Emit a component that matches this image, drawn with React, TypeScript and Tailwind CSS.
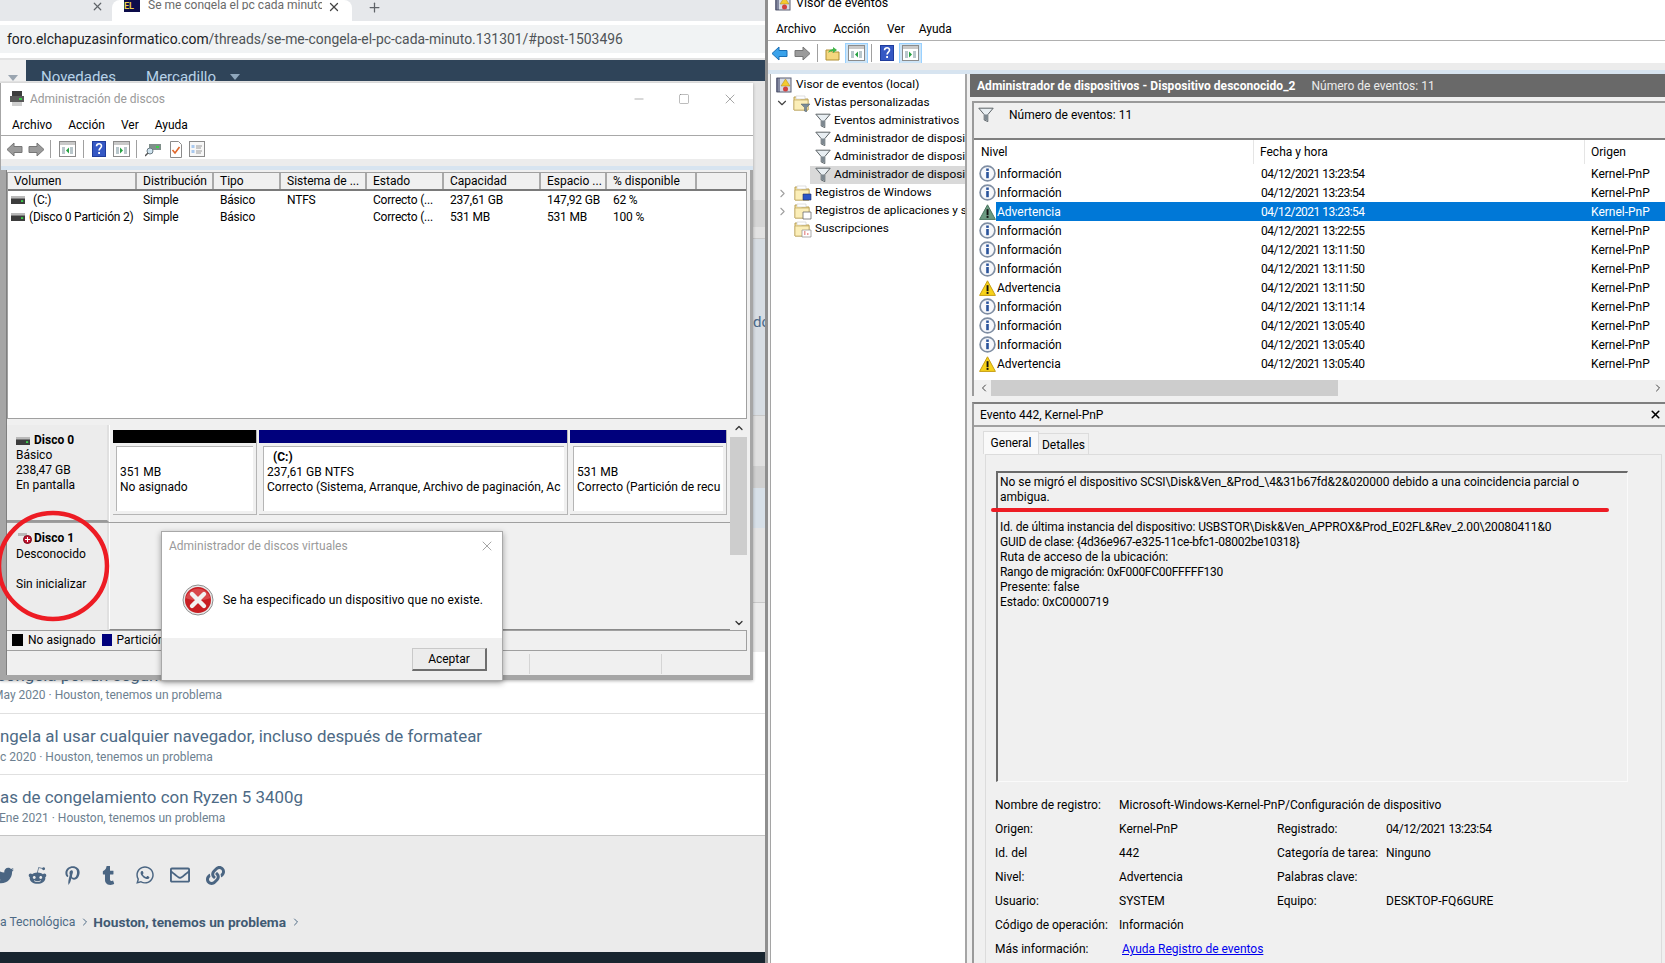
import React from "react";
import { X, Plus, Minus, Square, ChevronUp, ChevronDown, ChevronRight, ChevronLeft } from "lucide-react";
import { FaTwitter, FaRedditAlien, FaPinterestP, FaTumblr, FaWhatsapp, FaRegEnvelope, FaLink } from "react-icons/fa";

const Arrow = ({ dir, color, stroke }: { dir: "l" | "r"; color: string; stroke: string }) => (
  <svg width="17" height="15" viewBox="0 0 17 15" className={dir === "r" ? "-scale-x-100" : ""}>
    <path d="M1 7.5 8 1v3.5h8v6H8V14z" fill={color} stroke={stroke} />
  </svg>
);
const PanelIcon = ({ right }: { right?: boolean }) => (
  <svg width="17" height="16" viewBox="0 0 17 16">
    <rect x=".5" y=".5" width="16" height="15" fill="#fff" stroke="#8b8b8b" />
    <rect x="1" y="1" width="15" height="3" fill="#c9c9c9" />
    <rect x="3" y="6" width="3" height="7" fill="#b9c7cc" />
    <rect x="11" y="6" width="3" height="7" fill="#b9c7cc" />
    <path d={right ? "M7 6.5v6l3-3z" : "M10 6.5v6l-3-3z"} fill="#27a243" />
  </svg>
);
const Help = () => (
  <svg width="14" height="16" viewBox="0 0 14 16">
    <rect width="14" height="16" fill="#1f3c9c" />
    <rect x="1" y="1" width="12" height="14" fill="#3558c4" />
    <path d="M4.5 5.2C4.8 2 9.5 2 9.5 5c0 2-2.4 2.2-2.4 4.5" fill="none" stroke="#fff" strokeWidth="1.6" />
    <rect x="6.2" y="11" width="1.8" height="2" fill="#fff" />
  </svg>
);
const Sep = () => <div className="w-px h-[18px] bg-[#a0a0a0]" />;
const DriveIcon = () => (
  <svg width="14" height="8" viewBox="0 0 14 8" className="shrink-0">
    <rect y="0" width="14" height="2.4" fill="#b9b9b9" />
    <rect y="2.4" width="14" height="5.6" fill="#3c3c3c" />
    <rect x="10" y="4.2" width="2.2" height="1.8" fill="#3bd14a" />
  </svg>
);
const Funnel = ({ size = 16 }: { size?: number }) => (
  <svg width={size} height={size} viewBox="0 0 16 16" className="shrink-0">
    <path d="M.8 1.2h14.4L9.8 7.6v7L6.2 13V7.6z" fill="#e8eef2" stroke="#5d6468" />
    <path d="M6.4 7.6h3.2v6.2l-3.2-1.2z" fill="#7d8890" />
  </svg>
);
const Folder = ({ badge }: { badge?: "funnel" | "logs" | "app" | "sub" }) => (
  <svg width="18" height="17" viewBox="0 0 18 17" className="shrink-0">
    <path d="M1 2h5l1.5 2H15v11H1z" fill="#f8e39a" stroke="#b89f55" />
    <path d="M3 1h9v3H3z" fill="#fff" stroke="#c9c9c9" strokeWidth=".6" />
    <path d="M1 5h14v10H1z" fill="#fbeeb8" stroke="#c0a65f" strokeWidth=".7" />
    {badge === "funnel" && <path d="M8 9h9l-3.5 3.6V17l-2-1v-3.4z" fill="#7a8c98" stroke="#4f5d66" strokeWidth=".5" />}
    {badge === "logs" && <path d="M9 9h8v6H9z" fill="#2b56c6" stroke="#1e2d66" strokeWidth=".6" />}
    {badge === "app" && <path d="M9 9h8v7H9z" fill="#fff" stroke="#6b6b6b" strokeWidth=".8" />}
    {badge === "sub" && (
      <g>
        <path d="M8 9h9v7H8z" fill="#fff" stroke="#8a8a8a" strokeWidth=".7" />
        <path d="M10 13h1.5M13 13h1.5M10 11h1.5" stroke="#d23a3a" strokeWidth="1" />
      </g>
    )}
  </svg>
);
const ViewerIcon = () => (
  <svg width="16" height="16" viewBox="0 0 16 16" className="shrink-0">
    <rect x="1" y="1" width="14" height="14" fill="#d6dbe6" stroke="#5a5f73" />
    <path d="M1 1v14M3 1v14" stroke="#30365a" strokeWidth="1" />
    <path d="M9.5 2 14 9H5z" fill="#f4c92e" stroke="#a8861d" strokeWidth=".5" />
    <circle cx="9.5" cy="12" r="2.5" fill="#d2403f" />
  </svg>
);
const Info = () => (
  <svg width="17" height="17" viewBox="0 0 17 17" className="shrink-0">
    <circle cx="8.5" cy="8.5" r="7.4" fill="#f7f8fb" stroke="#7f8ea3" strokeWidth="1.7" />
    <rect x="7.2" y="7" width="2.6" height="6.2" fill="#29539b" />
    <rect x="7.2" y="3.5" width="2.6" height="2.4" fill="#29539b" />
  </svg>
);
const Warn = ({ sel }: { sel?: boolean }) => (
  <svg width="17" height="16" viewBox="0 0 17 16" className="shrink-0">
    <path d="M8.5 .8 16.4 15.4H.6z" fill={sel ? "#6c9a82" : "#f7d21a"} stroke={sel ? "#4a7660" : "#c69d12"} />
    <rect x="7.6" y="5.2" width="1.9" height="6" fill="#111" />
    <rect x="7.6" y="12" width="1.9" height="1.9" fill="#111" />
  </svg>
);
const ErrorIcon = () => (
  <svg width="32" height="32" viewBox="0 0 32 32">
    <circle cx="16" cy="16" r="15" fill="#e9e9e9" stroke="#8f8f8f" />
    <circle cx="16" cy="16" r="13" fill="#c81e23" />
    <path d="M3.5 14a13 13 0 0 1 25 0c-7 3-18 3-25 0z" fill="#e56266" opacity=".6" />
    <path d="M10 10l12 12M22 10 10 22" stroke="#f2f2f2" strokeWidth="4.4" strokeLinecap="round" />
  </svg>
);

const F = "[font-family:Roboto,'Liberation_Sans',sans-serif]";

const diskCols = [
  ["Volumen", 129],
  ["Distribución", 77],
  ["Tipo", 67],
  ["Sistema de ...", 86],
  ["Estado", 77],
  ["Capacidad", 97],
  ["Espacio ...", 66],
  ["% disponible", 90],
] as const;

const vols = [
  ["(C:)", "Simple", "Básico", "NTFS", "Correcto (...", "237,61 GB", "147,92 GB", "62 %"],
  ["(Disco 0 Partición 2)", "Simple", "Básico", "", "Correcto (...", "531 MB", "531 MB", "100 %"],
];

function DiskWindow() {
  return (
    <div className="absolute left-0 top-[83px] w-[753px] h-[597px] bg-[#a6a6a6] flex flex-col text-[12px] text-black shadow-[0_1px_3px_rgba(0,0,0,.3)]">
      <div className="bg-white ml-px h-[31px] flex items-center pl-[9px] pr-[15px] shrink-0">
        <svg width="14" height="16" viewBox="0 0 14 16" className="mr-[6px]">
          <rect x="2" y="0" width="10" height="8" fill="#3c3c3c" />
          <rect x="0" y="5" width="14" height="6" fill="#5a5a5a" />
          <rect x="2" y="11" width="10" height="4" fill="#cfcfcf" />
          <rect x="9" y="7" width="3" height="2" fill="#3bd14a" />
        </svg>
        <span className="text-[#9a9a9a]">Administración de discos</span>
        <div className="ml-auto flex items-center gap-[32px] text-[#7a7a7a]">
          <Minus size={14} strokeWidth={1} />
          <Square size={12} strokeWidth={1} />
          <X size={16} strokeWidth={1} />
        </div>
      </div>
      <div className="bg-white ml-px h-[22px] flex items-center gap-[16px] pl-[11px] border-b border-[#a8a8a8] shrink-0">
        <span>Archivo</span><span>Acción</span><span>Ver</span><span>Ayuda</span>
      </div>
      <div className="bg-white ml-px h-[23px] flex items-center pl-[5px] pt-[3px] shrink-0">
        <Arrow dir="l" color="#9b9b9b" stroke="#777" />
        <div className="w-[5px]" />
        <Arrow dir="r" color="#9b9b9b" stroke="#777" />
        <div className="w-[5px]" />
        <Sep />
        <div className="w-2" />
        <PanelIcon />
        <div className="w-[7px]" />
        <Sep />
        <div className="w-2" />
        <Help />
        <div className="w-[7px]" />
        <PanelIcon right />
        <div className="w-[6px]" />
        <Sep />
        <div className="w-2" />
        <svg width="16" height="16" viewBox="0 0 16 16"><rect x="4" y="3" width="12" height="6" fill="#7f8f8a" /><rect x="11" y="5" width="3" height="2" fill="#3bd14a" /><circle cx="5" cy="10" r="3" fill="#cfe3ef" stroke="#6b7c85" /><path d="M3 12 0 15" stroke="#555" strokeWidth="1.5" /></svg>
        <div className="w-[9px]" />
        <svg width="12" height="17" viewBox="0 0 12 17"><path d="M.5.5h8l3 3v13H.5z" fill="#fff" stroke="#8b8b8b" /><path d="M2.5 9l2.5 3 4.5-6" fill="none" stroke="#e0662a" strokeWidth="1.6" /></svg>
        <div className="w-[7px]" />
        <svg width="16" height="16" viewBox="0 0 16 16"><rect x=".5" y=".5" width="15" height="15" fill="#f7f7f7" stroke="#8b8b8b" /><path d="M2.5 4h3v3h-3zM2.5 9h3v3h-3z" fill="#a9c9ef" /><path d="M7 5h6M7 7h5M7 10h6M7 12h5" stroke="#9a9a9a" /></svg>
      </div>
      <div className="h-[7px] bg-[#ececec] ml-px shrink-0" />
      <div className="h-1 bg-[#d7e4f0] ml-px shrink-0" />
      <div className="flex-1 min-h-0 ml-[6px] mr-[3px] mb-[5px] flex flex-col bg-[#f0f0f0] border-l border-[#808080]">
        {/* volume table */}
        <div className="h-[247px] bg-white border border-[#a0a0a0] mr-[3px] mt-[2px] shrink-0 overflow-hidden">
          <div className="flex h-[18px] bg-[#f0f0f0] border-b-2 border-[#7a7a7a]">
            {diskCols.map(([t, w]) => (
              <div key={t} style={{ width: w }} className="pl-[6px] shrink-0 border-r-2 border-[#a9a9a9] whitespace-nowrap leading-[17px]">{t}</div>
            ))}
          </div>
          {vols.map((r, i) => (
            <div key={i} className="flex h-[17px] items-center tracking-[-0.2px]">
              {r.map((c, j) => (
                <div key={j} style={{ width: diskCols[j][1] }} className={`shrink-0 whitespace-nowrap ${j === 0 ? "pl-[3px] flex items-center" : "pl-[6px]"}`}>
                  {j === 0 ? (
                    <>
                      <DriveIcon />
                      <span className={i === 0 ? "ml-[8px]" : "ml-[4px]"}>{c}</span>
                    </>
                  ) : c}
                </div>
              ))}
            </div>
          ))}
        </div>
        {/* graphical pane */}
        <div className="h-[212px] flex shrink-0 border-b border-[#a0a0a0] mr-[3px]">
          <div className="flex-1 min-w-0 flex flex-col pt-[6px]">
            <div className="h-[98px] flex border-b border-[#a0a0a0] shrink-0">
              <div className="w-[102px] shrink-0 bg-[#ececec] border-r-2 border-b-2 border-[#e0e0e0] border-b-[#9a9a9a] pl-[9px] pt-[8px] leading-[15px]">
                <div className="flex items-center gap-[4px] font-bold"><DriveIcon /><span>Disco 0</span></div>
                <div>Básico</div>
                <div>238,47 GB</div>
                <div>En pantalla</div>
              </div>
              <div className="flex-1 flex pl-[3px] pt-[5px] pr-[3px] gap-[2px] bg-[#f0f0f0] border-l border-[#fff]">
                {[
                  ["w-[144px]", "bg-black", "", "351 MB", "No asignado"],
                  ["w-[309px]", "bg-[#00007c]", "(C:)", "237,61 GB NTFS", "Correcto (Sistema, Arranque, Archivo de paginación, Ac"],
                  ["flex-1", "bg-[#00007c]", "", "531 MB", "Correcto (Partición de recu"],
                ].map(([w, bg, h, a, b], i) => (
                  <div key={i} className={`${w} h-[85px] flex flex-col overflow-hidden border-r border-b border-[#b5b5b5]`}>
                    <div className={`${bg} h-[13px] shrink-0`} />
                    <div className={`flex-1 bg-white mt-[3px] border-l border-t border-[#b5b5b5] ml-[3px] mr-[3px] mb-[3px] pl-[3px] leading-[15px] whitespace-nowrap overflow-hidden ${i === 1 ? "ml-[4px] pt-[3px]" : "pt-[18px]"}`}>
                      {h && <div className="font-bold pl-[6px]">{h}</div>}
                      <div>{a}</div>
                      <div>{b}</div>
                    </div>
                  </div>
                ))}
              </div>
            </div>
            <div className="flex-1 flex">
              <div className="w-[102px] shrink-0 bg-[#ececec] border-r-2 border-[#e0e0e0] pl-[9px] pt-[8px] leading-[15px]">
                <div className="flex items-center gap-[2px] font-bold">
                  <span className="relative w-[16px] h-[12px] shrink-0">
                    <span className="absolute left-[2px] top-0 w-[9px] h-[3px] bg-[#b9b9b9]" />
                    <span className="absolute right-0 top-[2px] w-[9px] h-[9px] rounded-full bg-[#c4122f] border border-[#7a0a1b]" />
                    <span className="absolute right-[2px] top-[6px] w-[5px] h-px bg-white" />
                    <span className="absolute right-[4px] top-[4px] w-px h-[5px] bg-white" />
                  </span>
                  <span>Disco 1</span>
                </div>
                <div className="mt-px">Desconocido</div>
                <div className="mt-[15px]">Sin inicializar</div>
              </div>
              <div className="flex-1 border-l border-white border-b border-b-[#8a8a8a]" />
            </div>
          </div>
          <div className="w-[17px] shrink-0 bg-[#f0f0f0] flex flex-col items-center pt-[1px] pb-[1px]">
            <ChevronUp size={12} strokeWidth={2.5} className="text-[#333] shrink-0 mt-[2px]" />
            <div className="w-full h-[118px] bg-[#cdcdcd] mt-[3px]" />
            <div className="flex-1" />
            <ChevronDown size={12} strokeWidth={2.5} className="text-[#333] shrink-0" />
          </div>
        </div>
        {/* legend */}
        <div className="h-[20px] border-b border-r border-[#a0a0a0] mr-[3px] flex items-center pl-[5px] pb-[1px] shrink-0 whitespace-nowrap">
          <span className="w-[11px] h-[12px] bg-black mr-[5px]" />
          <span>No asignado</span>
          <span className="w-[10px] h-[12px] bg-[#00007c] ml-[6px] mr-[5px]" />
          <span>Partición primaria</span>
        </div>
        {/* status */}
        <div className="flex-1 mt-[2px] flex justify-end pr-[3px] bg-[#f0f0f0]">
          <div className="w-[132px] border-l border-[#d5d5d5] my-[1px]" />
          <div className="w-[86px] border-l border-[#d5d5d5] my-[1px]" />
        </div>
      </div>
    </div>
  );
}

function VirtualDialog() {
  return (
    <div className="absolute left-[161px] top-[531px] w-[342px] h-[150px] bg-white border border-[#a8a8a8] shadow-[0_2px_6px_rgba(0,0,0,.35)] flex flex-col text-[12px] text-black">
      <div className="h-[29px] flex items-center pl-[7px] pr-[7px] -mt-px shrink-0">
        <span className="text-[#9a9a9a]">Administrador de discos virtuales</span>
        <X size={16} strokeWidth={1} className="ml-auto text-[#777]" />
      </div>
      <div className="flex-1 flex items-center pl-[20px] gap-[9px] pt-[2px]">
        <ErrorIcon />
        <span className="tracking-[.1px]">Se ha especificado un dispositivo que no existe.</span>
      </div>
      <div className="h-[42px] bg-[#f0f0f0] flex items-center justify-end pr-[15px] shrink-0">
        <div className="w-[75px] h-[23px] bg-[#ececec] border border-[#c9c9c9] border-r-2 border-b-2 border-r-[#6e6e6e] border-b-[#6e6e6e] flex items-center justify-center">Aceptar</div>
      </div>
    </div>
  );
}

function Browser() {
  return (
    <div className={`relative w-[765px] h-[963px] shrink-0 overflow-hidden flex flex-col bg-white ${F}`}>
      {/* tabs */}
      <div className="h-[21px] shrink-0 bg-[#e6e8eb] flex items-start text-[#5f6368]">
        <X size={13} strokeWidth={2.2} className="ml-[91px] mt-0 shrink-0" />
        <div className="ml-[8px] w-[240px] h-[21px] bg-white rounded-t-lg flex items-start pl-[12px] shrink-0">
          <span className="w-[16px] h-[12px] bg-[#0c0c4a] shrink-0 text-[9px] font-bold text-[#e8d04a] leading-[12px] overflow-hidden">EL</span>
          <span className="ml-[8px] w-[174px] overflow-hidden whitespace-nowrap text-[12px] leading-[10px] text-[#6a6a6a]">Se me congela el pc cada minuto</span>
          <X size={14} strokeWidth={2.2} className="ml-[5px] shrink-0 text-[#444]" />
        </div>
        <Plus size={15} strokeWidth={2} className="ml-[15px] shrink-0" />
      </div>
      {/* address */}
      <div className="h-[37px] shrink-0 bg-white pt-[4px] pb-[5px]">
        <div className="h-[28px] bg-[#f1f3f4] flex items-center pl-[7px] pt-[1px] text-[13.9px] whitespace-nowrap text-[#4f5357]">
          <span className="text-[#202124]">foro.elchapuzasinformatico.com</span>/threads/se-me-congela-el-pc-cada-minuto.131301/#post-1503496
        </div>
      </div>
      {/* nav */}
      <div className="h-[23px] shrink-0 flex border-t-2 border-[#e3e3e3]">
        <div className="w-[26px] bg-[#f0f0f0] flex pl-[8px] pt-[15px]"><span className="w-0 h-0 border-x-[5px] border-x-transparent border-t-[6px] border-t-[#9aa5b0]" /></div>
        <div className="flex-1 bg-[#2f4459] flex items-start pl-[15px] pt-[8px] text-[15px] leading-[18px] text-[#b7d2e8] whitespace-nowrap">
          <span>Novedades</span>
          <span className="ml-[30px]">Mercadillo</span>
          <span className="ml-[14px] mt-[6px] w-0 h-0 border-x-[5px] border-x-transparent border-t-[6px] border-t-[#8fa7bc]" />
        </div>
      </div>
      {/* page bands behind the windows */}
      <div className="h-[119px] shrink-0 bg-[#e5e5e5]" />
      <div className="h-[27px] shrink-0 bg-[#d5d5d5]" />
      <div className="h-[12px] shrink-0 bg-[#e2e2e2] border-b border-[#c9c9c9]" />
      <div className="h-[176px] shrink-0 bg-[#d7dde3] relative">
        <span className="absolute right-0 top-[75px] text-[15px] leading-[16px] text-[#4a6a8a] w-[12px] overflow-hidden">do</span>
      </div>
      <div className="h-[51px] shrink-0 bg-[#e0e0e0] border-t border-[#c9c9c9]" />
      <div className="h-[22px] shrink-0 bg-[#d0d0d0]" />
      <div className="h-[40px] shrink-0 bg-[#d7e0e8]" />
      <div className="h-[75px] shrink-0 bg-[#e3e3e3] border-b border-[#c9c9c9]" />
      <div className="h-[49px] shrink-0 bg-[#ebebeb]" />
      {/* threads */}
      <div className="h-[62px] shrink-0 bg-white border-b border-[#e0e0e0] relative whitespace-nowrap overflow-hidden">
        <div className="text-[16.9px] leading-[22px] text-[#4d6a85] mt-[12px] -ml-[3px]">congela por un segundo</div>
        <div className="text-[12px] leading-[15px] text-[#6d7f90] mt-[2px] -ml-[7px]">May 2020 · Houston, tenemos un problema</div>
      </div>
      <div className="h-[61px] shrink-0 bg-white border-b border-[#e0e0e0] pt-[11px] whitespace-nowrap overflow-hidden">
        <div className="text-[16.9px] leading-[22px] text-[#4d6a85]">ngela al usar cualquier navegador, incluso después de formatear</div>
        <div className="text-[12px] leading-[15px] text-[#6d7f90] mt-[3px]">c 2020 · Houston, tenemos un problema</div>
      </div>
      <div className="h-[61px] shrink-0 bg-white border-b border-[#c4c4c4] pt-[11px] whitespace-nowrap overflow-hidden">
        <div className="text-[16.9px] leading-[22px] text-[#4d6a85]">as de congelamiento con Ryzen 5 3400g</div>
        <div className="text-[12px] leading-[15px] text-[#6d7f90] mt-[3px] -ml-[1px]">Ene 2021 · Houston, tenemos un problema</div>
      </div>
      <div className="flex-1 bg-[#ebebeb] flex flex-col">
        <div className="h-[77px] flex items-center pt-[1px] text-[#4a6582] shrink-0">
          <FaTwitter size={19} className="-ml-[5px] shrink-0" />
          <FaRedditAlien size={19} className="ml-[14px] shrink-0" />
          <FaPinterestP size={19} className="ml-[16px] shrink-0" />
          <FaTumblr size={19} className="ml-[17px] shrink-0" />
          <FaWhatsapp size={20} className="ml-[17px] shrink-0" />
          <FaRegEnvelope size={20} className="ml-[15px] shrink-0" />
          <FaLink size={19} className="ml-[16px] shrink-0" />
        </div>
        <div className="h-[18px] flex items-center text-[12.2px] text-[#4d6a85] whitespace-nowrap shrink-0">
          <span>a Tecnológica</span>
          <ChevronRight size={12} className="ml-[4px] shrink-0" />
          <span className="ml-[2px] text-[13.7px] font-bold text-[#415a73]">Houston, tenemos un problema</span>
          <ChevronRight size={12} className="ml-[4px] shrink-0" />
        </div>
        <div className="flex-1" />
        <div className="h-[11px] bg-[#18252f] shrink-0" />
      </div>

      <DiskWindow />
      <VirtualDialog />
      {/* hand-drawn annotation */}
      <svg width="114" height="114" viewBox="0 0 114 114" className="absolute left-0 top-[510px]">
        <ellipse cx="53" cy="56" rx="54" ry="53" fill="none" stroke="#ed1c24" strokeWidth="4.5" />
      </svg>
    </div>
  );
}

const treeRow = "h-[18px] flex items-center whitespace-nowrap overflow-hidden";

const events: [string, string][] = [
  ["i", "04/12/2021 13:23:54"],
  ["i", "04/12/2021 13:23:54"],
  ["s", "04/12/2021 13:23:54"],
  ["i", "04/12/2021 13:22:55"],
  ["i", "04/12/2021 13:11:50"],
  ["i", "04/12/2021 13:11:50"],
  ["w", "04/12/2021 13:11:50"],
  ["i", "04/12/2021 13:11:14"],
  ["i", "04/12/2021 13:05:40"],
  ["i", "04/12/2021 13:05:40"],
  ["w", "04/12/2021 13:05:40"],
];

function EventViewer() {
  return (
    <div className={`flex-1 min-w-0 h-[963px] flex flex-col bg-white border-l-[3px] border-[#8f8f8f] text-[12px] text-black overflow-hidden ${F}`}>
      <div className="h-[14px] shrink-0 flex items-center pl-[7px] gap-[5px] overflow-visible">
        <div className="-mt-[8px]"><ViewerIcon /></div>
        <span className="text-[12.5px] -mt-[8px]">Visor de eventos</span>
      </div>
      <div className="h-[27px] shrink-0 flex items-center gap-[17px] pl-[8px] pt-[4px] border-b border-[#b0b0b0] text-[12px]">
        <span>Archivo</span><span>Acción</span><span>Ver</span><span className="-ml-[3px]">Ayuda</span>
      </div>
      <div className="h-[22px] shrink-0 flex items-center pl-[3px] pt-[2px]">
        <Arrow dir="l" color="#3aa2ea" stroke="#1a6fb5" />
        <div className="w-[6px]" />
        <Arrow dir="r" color="#9b9b9b" stroke="#777" />
        <div className="w-[6px]" />
        <Sep />
        <div className="w-[7px]" />
        <svg width="15" height="15" viewBox="0 0 15 15" className="shrink-0"><path d="M1 4h5l1 2h7v8H1z" fill="#f5d77e" stroke="#b08f35" /><path d="M3 7c1-3 3-4 5-4V1l4 3-4 3V5C6 5 4 6 3 7z" fill="#42b54a" /></svg>
        <div className="w-[5px]" />
        <div className="w-[23px] h-[21px] bg-[#cce4f7] border border-[#99d1ff] flex items-center justify-center"><PanelIcon /></div>
        <div className="w-[3px]" />
        <Sep />
        <div className="w-[8px]" />
        <Help />
        <div className="w-[5px]" />
        <div className="w-[23px] h-[21px] bg-[#cce4f7] border border-[#99d1ff] flex items-center justify-center"><PanelIcon right /></div>
      </div>
      <div className="h-[7px] bg-[#ececec] shrink-0" />
      <div className="h-1 bg-[#d7e4f0] shrink-0" />
      <div className="flex-1 min-h-0 flex bg-[#f0f0f0] pl-[2px]">
        {/* tree */}
        <div className="w-[197px] shrink-0 bg-white border-l border-r-2 border-[#a5a5a5] overflow-hidden pl-[5px] pt-[2px] text-[11.8px]">
          <div className={treeRow}><ViewerIcon /><span className="ml-[4px]">Visor de eventos (local)</span></div>
          <div className={treeRow}>
            <ChevronDown size={14} strokeWidth={2} className="text-[#444] -ml-[1px] mr-[4px] shrink-0" />
            <Folder badge="funnel" /><span className="ml-[3px]">Vistas personalizadas</span>
          </div>
          <div className={`${treeRow} pl-[39px]`}><Funnel /><span className="ml-[3px]">Eventos administrativos</span></div>
          <div className={`${treeRow} pl-[39px]`}><Funnel /><span className="ml-[3px]">Administrador de dispositivos</span></div>
          <div className={`${treeRow} pl-[39px]`}><Funnel /><span className="ml-[3px]">Administrador de dispositivos</span></div>
          <div className={`${treeRow} ml-[34px] pl-[5px] bg-[#d9d9d9]`}><Funnel /><span className="ml-[3px]">Administrador de dispositivos</span></div>
          <div className={treeRow}>
            <ChevronRight size={13} strokeWidth={2} className="text-[#a0a0a0] mr-[5px] shrink-0" />
            <Folder badge="logs" /><span className="ml-[3px]">Registros de Windows</span>
          </div>
          <div className={treeRow}>
            <ChevronRight size={13} strokeWidth={2} className="text-[#a0a0a0] mr-[5px] shrink-0" />
            <Folder badge="app" /><span className="ml-[3px]">Registros de aplicaciones y servicios</span>
          </div>
          <div className={`${treeRow} pl-[18px]`}><Folder badge="sub" /><span className="ml-[3px]">Suscripciones</span></div>
        </div>
        {/* right */}
        <div className="flex-1 min-w-0 flex flex-col pl-[3px]">
          <div className="h-[23px] shrink-0 bg-[#696969] text-white flex items-center pl-[7px] whitespace-nowrap">
            <span className="font-bold tracking-[.04px]">Administrador de dispositivos - Dispositivo desconocido_2</span>
            <span className="ml-[16px] text-[#ececec]">Número de eventos: 11</span>
          </div>
          <div className="h-[295px] shrink-0 mt-[4px] ml-[2px] border-t-2 border-l-2 border-[#9a9a9a] flex flex-col">
            <div className="h-[37px] shrink-0 bg-[#f0f0f0] border-b-2 border-[#7f7f7f] flex items-start pl-[4px] pt-[4px]">
              <Funnel />
              <span className="ml-[15px] leading-[16px]">Número de eventos: 11</span>
            </div>
            <div className="flex-1 bg-white flex flex-col overflow-hidden">
              <div className="grid grid-cols-[280px_331px_1fr] h-[24px] shrink-0 items-center">
                <span className="pl-[7px] border-r border-[#e5e5e5] h-full flex items-center">Nivel</span>
                <span className="pl-[6px] border-r border-[#e5e5e5] h-full flex items-center">Fecha y hora</span>
                <span className="pl-[6px]">Origen</span>
              </div>
              {events.map(([k, d], i) => (
                <div key={i} className="grid grid-cols-[280px_331px_1fr] h-[19px] shrink-0 items-center">
                  <div className="flex items-center pl-[5px] h-full">
                    {k === "i" ? <Info /> : k === "w" ? <Warn /> : <Warn sel />}
                    <span className={`pl-[1px] flex-1 h-full flex items-center ${k === "s" ? "bg-[#0078d7] text-white" : ""}`}>{k === "i" ? "Información" : "Advertencia"}</span>
                  </div>
                  <div className={`pl-[7px] h-full flex items-center tracking-[-0.5px] ${k === "s" ? "bg-[#0078d7] text-white" : ""}`}>{d}</div>
                  <div className={`pl-[6px] h-full flex items-center ${k === "s" ? "bg-[#0078d7] text-white" : ""}`}>Kernel-PnP</div>
                </div>
              ))}
              <div className="flex-1" />
              <div className="h-[16px] shrink-0 bg-[#f0f0f0] flex items-center">
                <ChevronLeft size={12} strokeWidth={2} className="ml-[4px] text-[#444] shrink-0" />
                <div className="w-[347px] h-full bg-[#cdcdcd] ml-[1px] shrink-0" />
                <div className="flex-1" />
                <ChevronRight size={12} strokeWidth={2} className="text-[#444] shrink-0 mr-[1px]" />
              </div>
            </div>
          </div>
          <div className="flex-1 min-h-0 mt-[6px] ml-[2px] border-t-2 border-t-[#7f7f7f] border-l-2 border-l-[#9a9a9a] flex flex-col bg-[#f0f0f0]">
            <div className="h-[23px] shrink-0 border-b-2 border-[#a0a0a0] flex items-center pl-[6px] pr-[3px] relative">
              <span>Evento 442, Kernel-PnP</span>
              <X size={13} strokeWidth={3} className="ml-auto" />
            </div>
            <div className="flex items-end h-[27px] shrink-0 pl-[9px]">
              <div className="h-[23px] w-[56px] bg-[#f9f9f9] border border-b-0 border-[#dcdcdc] flex items-center justify-center">General</div>
              <div className="h-[21px] w-[50px] bg-[#f0f0f0] border border-l-0 border-b-0 border-[#dcdcdc] flex items-center justify-center pt-[1px]">Detalles</div>
            </div>
            <div className="flex-1 ml-[11px] mr-[3px] border-t border-l border-r border-[#dcdcdc] pl-[10px] pt-[16px]">
              <div className="relative w-[632px] h-[311px] border-t-2 border-l-2 border-r border-b border-[#6a6a6a] border-r-[#fafafa] border-b-[#fafafa] pl-[2px] pt-[2px] leading-[15px] whitespace-pre">
                <div className="tracking-[-0.03px]">No se migró el dispositivo SCSI\Disk&amp;Ven_&amp;Prod_\4&amp;31b67fd&amp;2&amp;020000 debido a una coincidencia parcial o</div>
                <div>ambigua.</div>
                <div className="mt-[15px] tracking-[-0.12px]">Id. de última instancia del dispositivo: USBSTOR\Disk&amp;Ven_APPROX&amp;Prod_E02FL&amp;Rev_2.00\20080411&amp;0</div>
                <div className="tracking-[-0.24px]">GUID de clase: {"{4d36e967-e325-11ce-bfc1-08002be10318}"}</div>
                <div>Ruta de acceso de la ubicación:</div>
                <div className="tracking-[-0.27px]">Rango de migración: 0xF000FC00FFFFF130</div>
                <div>Presente: false</div>
                <div className="tracking-[-0.1px]">Estado: 0xC0000719</div>
                <div className="absolute -left-[7px] top-[35px] w-[618px] h-1 bg-[#ed1c24] rounded-full" />
              </div>
              <div className="grid grid-cols-[124px_158px_109px_1fr] auto-rows-[24px] items-center -ml-px mt-[11px] whitespace-nowrap">
                <span>Nombre de registro:</span><span className="col-span-3">Microsoft-Windows-Kernel-PnP/Configuración de dispositivo</span>
                <span>Origen:</span><span>Kernel-PnP</span><span>Registrado:</span><span className="tracking-[-0.4px]">04/12/2021 13:23:54</span>
                <span>Id. del</span><span>442</span><span>Categoría de tarea:</span><span>Ninguno</span>
                <span>Nivel:</span><span>Advertencia</span><span>Palabras clave:</span><span />
                <span>Usuario:</span><span>SYSTEM</span><span>Equipo:</span><span>DESKTOP-FQ6GURE</span>
                <span>Código de operación:</span><span className="col-span-3">Información</span>
                <span>Más información:</span><span className="col-span-3 pl-[3px] text-[#0000ee] underline">Ayuda Registro de eventos</span>
              </div>
            </div>
          </div>
        </div>
      </div>
    </div>
  );
}

export default function App() {
  return (
    <div className="w-[1665px] h-[963px] overflow-hidden flex bg-white">
      <Browser />
      <EventViewer />
    </div>
  );
}
